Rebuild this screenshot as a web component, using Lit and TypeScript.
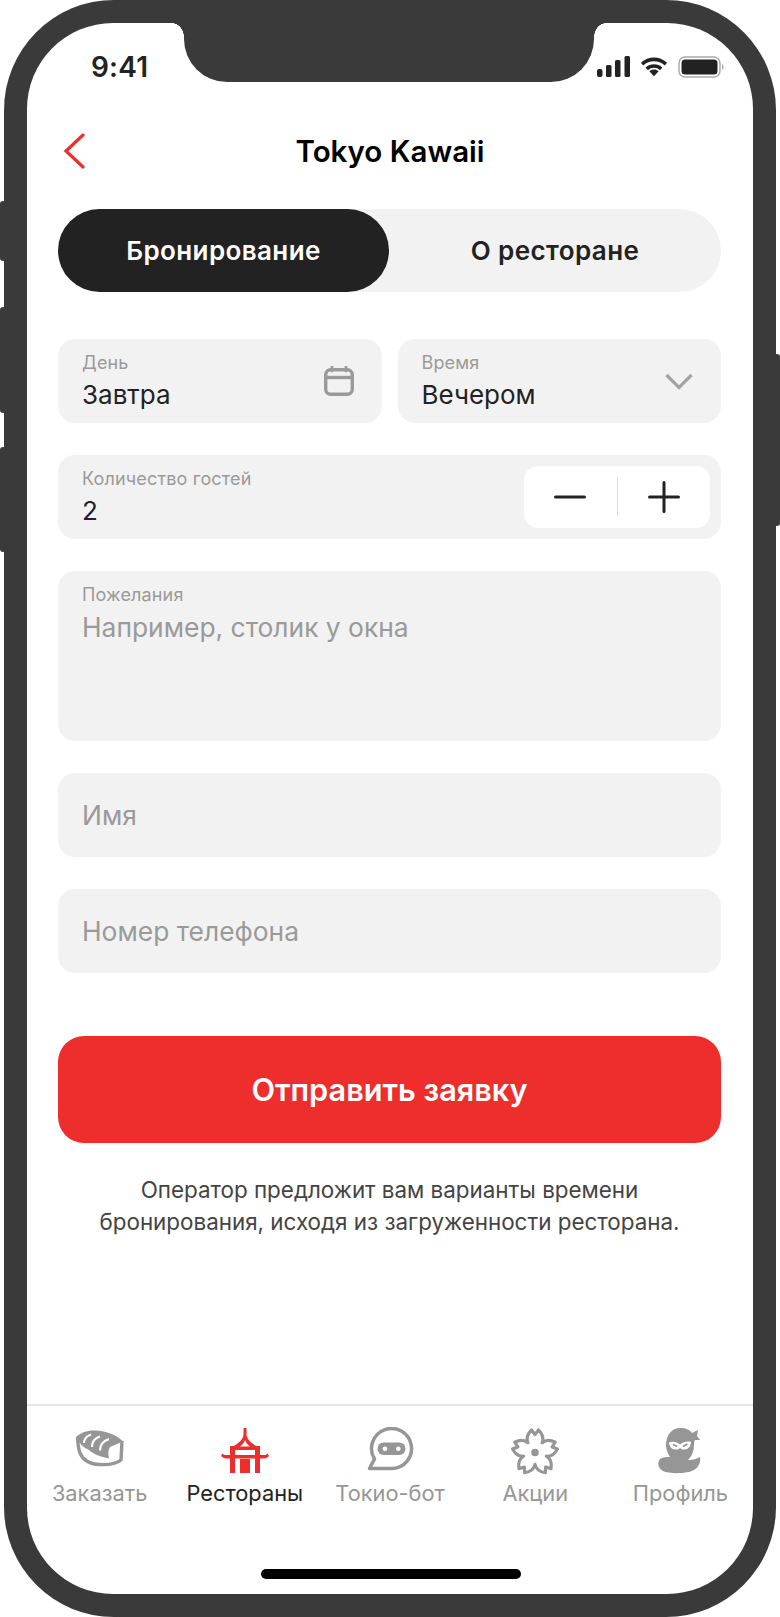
import { LitElement, html, css, svg } from "lit";
import { customElement } from "lit/decorators.js";

const FLOWER = [0, 72, 144, 216, 288]
  .map((deg) => {
    const a = (deg * Math.PI) / 180;
    const p = (x: number, y: number) =>
      `${(25 + x * Math.cos(a) - y * Math.sin(a)).toFixed(2)} ${(25.5 + x * Math.sin(a) + y * Math.cos(a)).toFixed(2)}`;
    const start = deg === 0 ? `M${p(-7, -9.7)}` : `L${p(-7, -9.7)}`;
    return `${start}C${p(-8.5, -13)} ${p(-8, -18)} ${p(-3.5, -22.5)}L${p(0, -18)}L${p(3.5, -22.5)}C${p(8, -18)} ${p(8.5, -13)} ${p(7, -9.7)}`;
  })
  .join("") + "Z";

const tabs = [
  {
    label: "Заказать",
    icon: svg`<path d="M2.500 10C3 17 3 21 5 26 8 33 15 37 24 37.500 32 38 41 37 46 33L47 14" fill="none" stroke="currentColor" stroke-width="3.400"/><path d="M1.500 9.500C8 4 15 3 21 3.500 31 4 42 8 48 14.500L35 20C33 23 33 27 34 31.500 26 30 18 27 14 23 9 21 3 16 1.500 9.500Z" fill="currentColor"/><path d="M9 16C9 12 12 9 16 7.500M17 20C17 15 20 11 25 9.500M25 23.500C25 18 28 14 34 12" fill="none" stroke="#fff" stroke-width="2.200"/>`,
  },
  {
    label: "Рестораны",
    icon: svg`<path fill-rule="evenodd" d="M23.500 1H26.500V8C27 12 31 16 36 19H40V23H10V19H14C19 16 23 12 23.500 8ZM25 13C24 16 22 18 20 19.500H30C28 18 26 16 25 13Z" fill="currentColor"/><path d="M10 23H15V28H35V23H40V28H44C45.500 28 46.500 27.500 47.500 26.500L49 29C47.500 30.500 46 31.500 44 31.500H40V46H35V31.500H15V46H10V31.500H6C4 31.500 2.500 30.500 1 29L2.500 26.500C3.500 27.500 4.500 28 6 28H10Z" fill="currentColor"/><rect x="20" y="32" width="10" height="14" fill="currentColor"/>`,
  },
  {
    label: "Токио-бот",
    icon: svg`<path d="M9.500 32A20 20 0 1 1 26.500 41.500H4.500Z" fill="none" stroke="currentColor" stroke-width="3.500" stroke-linejoin="round"/><rect x="12.500" y="15.500" width="28" height="12.500" rx="6.200" fill="currentColor"/><circle cx="20" cy="21.800" r="2.300" fill="#fff"/><circle cx="33.300" cy="21.800" r="2.300" fill="#fff"/>`,
  },
  {
    label: "Акции",
    icon: svg`<path d="${FLOWER}" fill="none" stroke="currentColor" stroke-width="3.200" stroke-linejoin="round"/><circle cx="25" cy="25.500" r="3.800" fill="currentColor"/>`,
  },
  {
    label: "Профиль",
    icon: svg`<path d="M11 18C11 8 17 1 25 1 31 1 35 3 37 6L43 3 42 9 45 13 40 13C39 14 39 16 39 18 39 24 37 29 33 33 37 33.500 41 32 45 30 46 36 43 41 39 43 32 47 14 47 8 44 3 41 2 36 5 32 8 30 12 30 15 30 13 27 11 23 11 18Z" fill="currentColor"/><path d="M14 15.500C18 14 22 15 25 17.500 28 15 32 14 36 15 36 19 33 22.500 29.500 22.500 27.500 22.500 26 22 25 21 24 22 22.500 22.500 20.500 22.500 17 22.500 14 19.500 14 15.500Z" fill="#fff"/><path d="M18 17.500 22 19.500M32.500 17 28 19.500" stroke="currentColor" stroke-width="1.800"/>`,
  },
];

@customElement("app-root")
export class AppRoot extends LitElement {
  static styles = css`
    :host { display: block; width: 780px; height: 1617px; position: relative; background: #fff; font-family: Inter, "Noto Sans", sans-serif; color: #222; overflow: hidden; }
    .device { box-sizing: border-box; width: 772px; height: 1617px; margin-left: 4px; background: #3a3a3a; border-radius: 110px; padding: 23px; }
    .btn { position: absolute; width: 6px; background: #3a3a3a; border-radius: 5px; }
    .l1 { left: 0; top: 201px; height: 60px; }
    .l2 { left: 0; top: 307px; height: 106px; }
    .l3 { left: 0; top: 447px; height: 105px; }
    .r1 { right: 0; top: 354px; height: 172px; }
    .screen { position: relative; box-sizing: border-box; height: 1571px; background: #fff; border-radius: 86px; overflow: hidden; display: flex; flex-direction: column; }
    .notch { position: absolute; left: 157px; top: 0; width: 410px; height: 59px; background: #3a3a3a; border-radius: 0 0 43px 43px; }
    .notch::before, .notch::after { content: ""; position: absolute; top: 0; width: 12px; height: 14px; background: radial-gradient(ellipse 12px 14px at 0 100%, transparent 97%, #3a3a3a 100%); }
    .notch::before { left: -12px; }
    .notch::after { right: -12px; transform: scaleX(-1); }
    .status { height: 59px; display: flex; justify-content: space-between; align-items: center; padding: 28px 28px 0 64px; box-sizing: border-box; }
    .time { font-size: 28px; font-weight: 600; letter-spacing: 0.200px; color: #222; }
    .sys { display: flex; align-items: center; gap: 10px; }
    .nav { position: relative; display: flex; justify-content: center; align-items: center; height: 60px; margin-top: 40px; }
    .nav h1 { margin: 0; font-size: 29.500px; font-weight: 600; color: #000; line-height: 1; }
    .back { position: absolute; left: 36px; top: 11px; }
    .content { padding: 0 32px 0 31px; display: flex; flex-direction: column; }
    .seg { margin-top: 27px; height: 83px; display: flex; background: #f2f2f2; border-radius: 42px; font-size: 26px; font-weight: 600; letter-spacing: 0.400px; }
    .seg div { flex: 1; display: flex; align-items: center; justify-content: center; border-radius: 42px; }
    .seg .on { background: #222; color: #fff; }
    .seg div:last-child { flex: 0 0 332px; }
    .form { margin-top: 47px; display: flex; flex-direction: column; gap: 32px; }
    .row { display: flex; gap: 16px; }
    .row .f { flex: 1; padding-right: 28px; }
    .f { position: relative; box-sizing: border-box; height: 84px; background: #f2f2f2; border-radius: 17px; padding: 13px 24px; display: flex; justify-content: space-between; align-items: center; }
    .f.area { height: 170px; align-items: flex-start; }
    .stack { align-self: flex-start; }
    .lab { font-size: 18px; line-height: 21px; color: #9a9a9a; letter-spacing: 0.150px; }
    .val { font-size: 26px; line-height: 32px; color: #222; margin-top: 6px; }
    .ph { color: #9a9a9a; font-size: 26.400px; line-height: 32px; }
    .area .ph { margin-top: 6px; }
    .stepper { position: absolute; right: 11px; top: 11px; width: 186px; height: 62px; background: #fff; border-radius: 14px; display: grid; grid-template-columns: 1fr 1px 1fr; align-items: center; justify-items: center; }
    .sep { width: 1px; height: 38px; background: #ddd; }
    .submit { margin-top: 63px; height: 107px; border-radius: 26px; background: #ee2d2d; color: #fff; font-size: 30.700px; font-weight: 600; display: flex; align-items: center; justify-content: center; }
    .note { margin: 31px 0 0; text-align: center; font-size: 22.400px; line-height: 32px; color: #444; }
    .spacer { flex: 1; }
    .tabbar { border-top: 2px solid #e6e6e6; height: 190px; box-sizing: border-box; padding-top: 21px; position: relative; display: flex; }
    .tab { flex: 1; display: flex; flex-direction: column; align-items: center; gap: 5px; color: #969696; font-size: 21.800px; line-height: 26px; white-space: nowrap; }
    .tab svg { width: 50px; height: 48px; flex: none; }
    .tab.on { color: #ee2d2d; }
    .tab.on span { color: #222; }
    .home { position: absolute; left: 234px; bottom: 15px; width: 260px; height: 10px; border-radius: 5px; background: #000; }
  `;

  render() {
    return html`
      <div class="btn l1"></div><div class="btn l2"></div><div class="btn l3"></div><div class="btn r1"></div>
      <div class="device">
        <div class="screen">
          <div class="notch"></div>
          <div class="status">
            <span class="time">9:41</span>
            <span class="sys">
              <svg width="33" height="21" viewBox="0 0 33 21"><rect x="0" y="13" width="5.500" height="8" rx="2" fill="#222"/><rect x="9" y="9" width="5.500" height="12" rx="1.500" fill="#222"/><rect x="18" y="4" width="5.500" height="17" rx="1.500" fill="#222"/><rect x="27.500" y="0" width="5.500" height="21" rx="1.500" fill="#222"/></svg>
              <svg width="28" height="21" viewBox="0 0 30 21"><path d="M15 21 10 15.500C13 13 17 13 20 15.500ZM6 11.500C11 7 19 7 24 11.500L21.500 14.500C18 11 12 11 8.500 14.500ZM1 6.500C9 -1 21 -1 29 6.500L26.500 9.500C20 3.500 10 3.500 3.500 9.500Z" fill="#222"/></svg>
              <svg width="47" height="22" viewBox="0 0 47 22"><rect x="1" y="1" width="41" height="20" rx="6" fill="none" stroke="#aaa" stroke-width="1.500"/><rect x="3.500" y="3.500" width="36" height="15" rx="3.500" fill="#222"/><path d="M44 8C46 9 46 13 44 14Z" fill="#aaa"/></svg>
            </span>
          </div>
          <div class="nav">
            <svg class="back" width="22" height="36" viewBox="0 0 22 36"><path d="M20 2 3 18 20 34" fill="none" stroke="#ee2d2d" stroke-width="3.200" stroke-linecap="round"/></svg>
            <h1>Tokyo Kawaii</h1>
          </div>
          <div class="content">
            <div class="seg"><div class="on">Бронирование</div><div>О ресторане</div></div>
            <div class="form">
              <div class="row">
                <div class="f">
                  <div class="stack"><div class="lab">День</div><div class="val">Завтра</div></div>
                  <svg width="30" height="30" viewBox="0 0 30 30"><rect x="1.700" y="3.700" width="26.600" height="24.600" rx="5" fill="none" stroke="#9a9a9a" stroke-width="3.400"/><path d="M2 11.500H28" stroke="#9a9a9a" stroke-width="3.400"/><path d="M8 1V5M22 1V5" stroke="#9a9a9a" stroke-width="2.800" stroke-linecap="round"/></svg>
                </div>
                <div class="f">
                  <div class="stack"><div class="lab">Время</div><div class="val">Вечером</div></div>
                  <svg width="28" height="17" viewBox="0 0 28 17"><path d="M1.500 2 14 14.500 26.500 2" fill="none" stroke="#a3a3a3" stroke-width="3.200"/></svg>
                </div>
              </div>
              <div class="f">
                <div class="stack"><div class="lab">Количество гостей</div><div class="val">2</div></div>
                <div class="stepper">
                  <svg width="32" height="32" viewBox="0 0 32 32"><path d="M1.500 16H30.500" stroke="#222" stroke-width="3" stroke-linecap="round"/></svg>
                  <div class="sep"></div>
                  <svg width="32" height="32" viewBox="0 0 32 32"><path d="M1.500 16H30.500M16 1.500V30.500" stroke="#222" stroke-width="3" stroke-linecap="round"/></svg>
                </div>
              </div>
              <div class="f area"><div class="stack"><div class="lab">Пожелания</div><div class="ph">Например, столик у окна</div></div></div>
              <div class="f"><div class="ph">Имя</div></div>
              <div class="f"><div class="ph">Номер телефона</div></div>
            </div>
            <div class="submit">Отправить заявку</div>
            <p class="note">Оператор предложит вам варианты времени<br />бронирования, исходя из загруженности ресторана.</p>
          </div>
          <div class="spacer"></div>
          <div class="tabbar">
            ${tabs.map((t, i) => html`<div class="tab ${i === 1 ? "on" : ""}"><svg viewBox="0 0 50 48">${t.icon}</svg><span>${t.label}</span></div>`)}
            <div class="home"></div>
          </div>
        </div>
      </div>
    `;
  }
}
